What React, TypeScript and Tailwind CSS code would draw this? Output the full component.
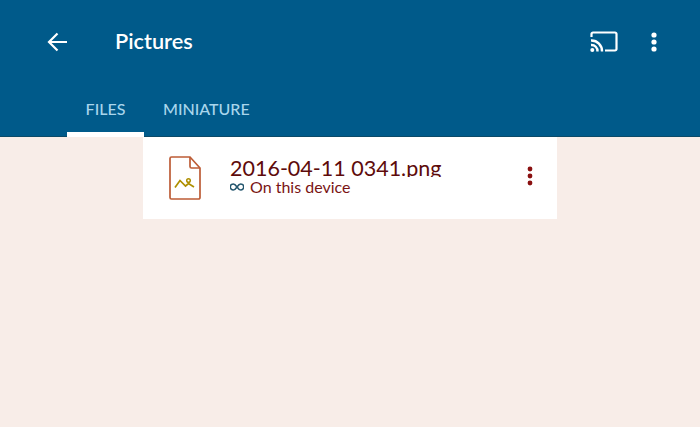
import React from 'react';

function CastIcon() {
  return (
    <svg width="28" height="22" viewBox="0 0 28 22" fill="none" stroke="#ffffff" strokeWidth="2.200">
      <path d="M1.500 6V3a1.500 1.500 0 0 1 1.500-1.500h22A1.500 1.500 0 0 1 26.500 3v15a1.500 1.500 0 0 1-1.500 1.500H15" />
      <path d="M1 9.500a10.500 10.500 0 0 1 11 11" strokeWidth="2.400" />
      <path d="M1 14a6 6 0 0 1 6.500 6.500" strokeWidth="2.400" />
      <circle cx="2.300" cy="19" r="2" fill="#ffffff" stroke="none" />
    </svg>
  );
}

function Dots({ color, size }: { color: string; size: 'lg' | 'sm' }) {
  const r = size === 'lg' ? 2.6 : 2.4;
  return (
    <svg width="6" height="20" viewBox="0 0 6 20" fill={color}>
      <circle cx="3" cy="3" r={r} />
      <circle cx="3" cy="10" r={r} />
      <circle cx="3" cy="17" r={r} />
    </svg>
  );
}

function FileIcon() {
  return (
    <svg width="32" height="44" viewBox="0 0 32 44" fill="none">
      <path
        d="M1 2.500A1.500 1.500 0 0 1 2.500 1H21l10 11v29.500a1.500 1.500 0 0 1-1.500 1.500h-27A1.500 1.500 0 0 1 1 41.500Z"
        stroke="#bd5c36"
        strokeWidth="1.700"
      />
      <path d="M21 1v9.500a1.500 1.500 0 0 0 1.500 1.500H31" stroke="#bd5c36" strokeWidth="1.700" />
      <path d="M6 31.500l5-7 5.500 5.500 3-2.500 5.500 3.500" stroke="#ae8f00" strokeWidth="1.700" />
      <circle cx="19.500" cy="24.500" r="1.800" stroke="#ae8f00" strokeWidth="1.500" />
    </svg>
  );
}

function LinkIcon() {
  return (
    <svg width="14" height="8" viewBox="0 0 14 8" fill="none" stroke="#24566e" strokeWidth="1.500">
      <path d="M7 4C5.500 1.800 4.500 1 3.300 1a3 3 0 0 0 0 6C4.500 7 5.500 6.200 7 4c1.500-2.200 2.500-3 3.700-3a3 3 0 0 1 0 6C9.500 7 8.500 6.200 7 4Z" />
    </svg>
  );
}

export default function App() {
  return (
    <div className="flex h-[427px] w-[700px] flex-col overflow-hidden bg-[#f8ede8] font-['Lato','Noto_Sans',sans-serif]">
      <header className="h-[137px] shrink-0 border-b border-[#0b4a68] bg-[#005a8a]">
        <div className="flex h-[83px] items-center pl-[47px] pr-[43px]">
          <svg width="21" height="20" viewBox="0 0 21 20" fill="none" stroke="#ffffff" strokeWidth="2.200">
            <path d="M20 10H2M10.500 1.500 2 10l8.500 8.500" />
          </svg>
          <h1 className="ml-[47px] text-[21.700px] font-semibold text-white">Pictures</h1>
          <div className="ml-auto flex items-center gap-[33px]">
            <CastIcon />
            <Dots color="#ffffff" size="lg" />
          </div>
        </div>
        <nav className="flex h-[53px] pl-[67px] text-[16px] font-medium leading-none text-[#a9d6ec]">
          <div className="mb-[-1px] flex w-[77px] items-center justify-center border-b-[5px] border-white pt-[2px]">
            FILES
          </div>
          <div className="flex items-center px-[19px] pb-[1px]">MINIATURE</div>
        </nav>
      </header>
      <main className="mx-auto flex h-[82px] w-[414px] items-center bg-white pl-[26px] pr-[24px]">
        <FileIcon />
        <div className="ml-[29px] min-w-0 flex-1 pb-[5px]">
          <div className="h-[22px] overflow-hidden text-[21.500px] leading-[26px] text-[#5e0b0b]">2016-04-11 0341.png</div>
          <div className="flex items-center gap-[6px] text-[16px] leading-[19px] text-[#7a1414]">
            <LinkIcon />
            On this device
          </div>
        </div>
        <div className="pb-[4px]">
          <Dots color="#8a1010" size="sm" />
        </div>
      </main>
    </div>
  );
}
